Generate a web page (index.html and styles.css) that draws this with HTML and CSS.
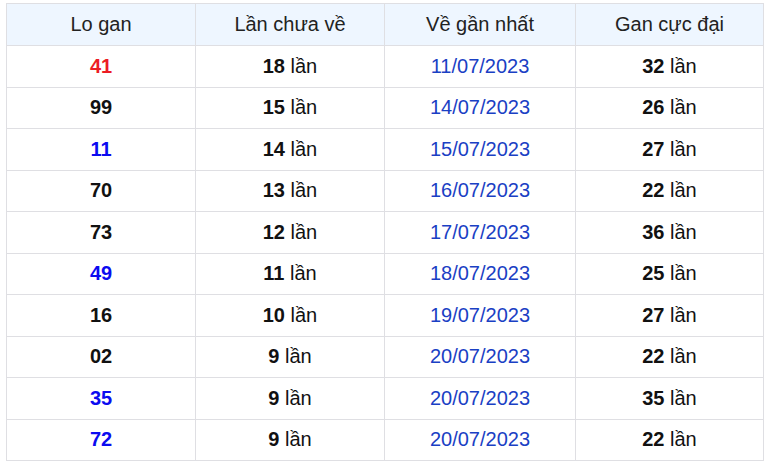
FILE: index.html
```html
<!DOCTYPE html>
<html lang="vi">
<head>
<meta charset="utf-8">
<link rel="stylesheet" href="styles.css">
</head>
<body>
<table class="gan">
<colgroup><col class="c1"><col class="c2"><col class="c3"><col class="c4"></colgroup>
<thead>
<tr><th>Lo gan</th><th>Lần chưa về</th><th>Về gần nhất</th><th>Gan cực đại</th></tr>
</thead>
<tbody>
<tr><td class="num red">41</td><td><b>18</b> lần</td><td class="date">11/07/2023</td><td><b>32</b> lần</td></tr>
<tr><td class="num">99</td><td><b>15</b> lần</td><td class="date">14/07/2023</td><td><b>26</b> lần</td></tr>
<tr><td class="num blue">11</td><td><b>14</b> lần</td><td class="date">15/07/2023</td><td><b>27</b> lần</td></tr>
<tr><td class="num">70</td><td><b>13</b> lần</td><td class="date">16/07/2023</td><td><b>22</b> lần</td></tr>
<tr><td class="num">73</td><td><b>12</b> lần</td><td class="date">17/07/2023</td><td><b>36</b> lần</td></tr>
<tr><td class="num blue">49</td><td><b>11</b> lần</td><td class="date">18/07/2023</td><td><b>25</b> lần</td></tr>
<tr><td class="num">16</td><td><b>10</b> lần</td><td class="date">19/07/2023</td><td><b>27</b> lần</td></tr>
<tr><td class="num">02</td><td><b>9</b> lần</td><td class="date">20/07/2023</td><td><b>22</b> lần</td></tr>
<tr><td class="num blue">35</td><td><b>9</b> lần</td><td class="date">20/07/2023</td><td><b>35</b> lần</td></tr>
<tr><td class="num blue">72</td><td><b>9</b> lần</td><td class="date">20/07/2023</td><td><b>22</b> lần</td></tr>
</tbody>
</table>
</body>
</html>
```
FILE: styles.css
```css
html, body {
  margin: 0;
  background: #fff;
}
body {
  padding: 3px 5px 0 6px;
  font-family: "Liberation Sans", Arial, sans-serif;
  font-size: 20px;
  color: #111;
}
.gan {
  width: 757px;
  border-collapse: collapse;
  table-layout: fixed;
}
.c1 { width: 189px; }
.c2 { width: 189px; }
.c3 { width: 191px; }
.c4 { width: 188px; }
.gan th, .gan td {
  border: 1px solid #dfdfe3;
  text-align: center;
  padding: 0;
}
.gan th {
  height: 41px;
  background: #eef6ff;
  font-weight: normal;
  color: #222;
}
.gan td {
  height: 40.5px;
}
.gan b {
  font-weight: bold;
}
.num {
  font-weight: bold;
}
.red { color: #ec1c24; }
.blue { color: #0b0bf0; }
.date { color: #1a40c4; }
```
